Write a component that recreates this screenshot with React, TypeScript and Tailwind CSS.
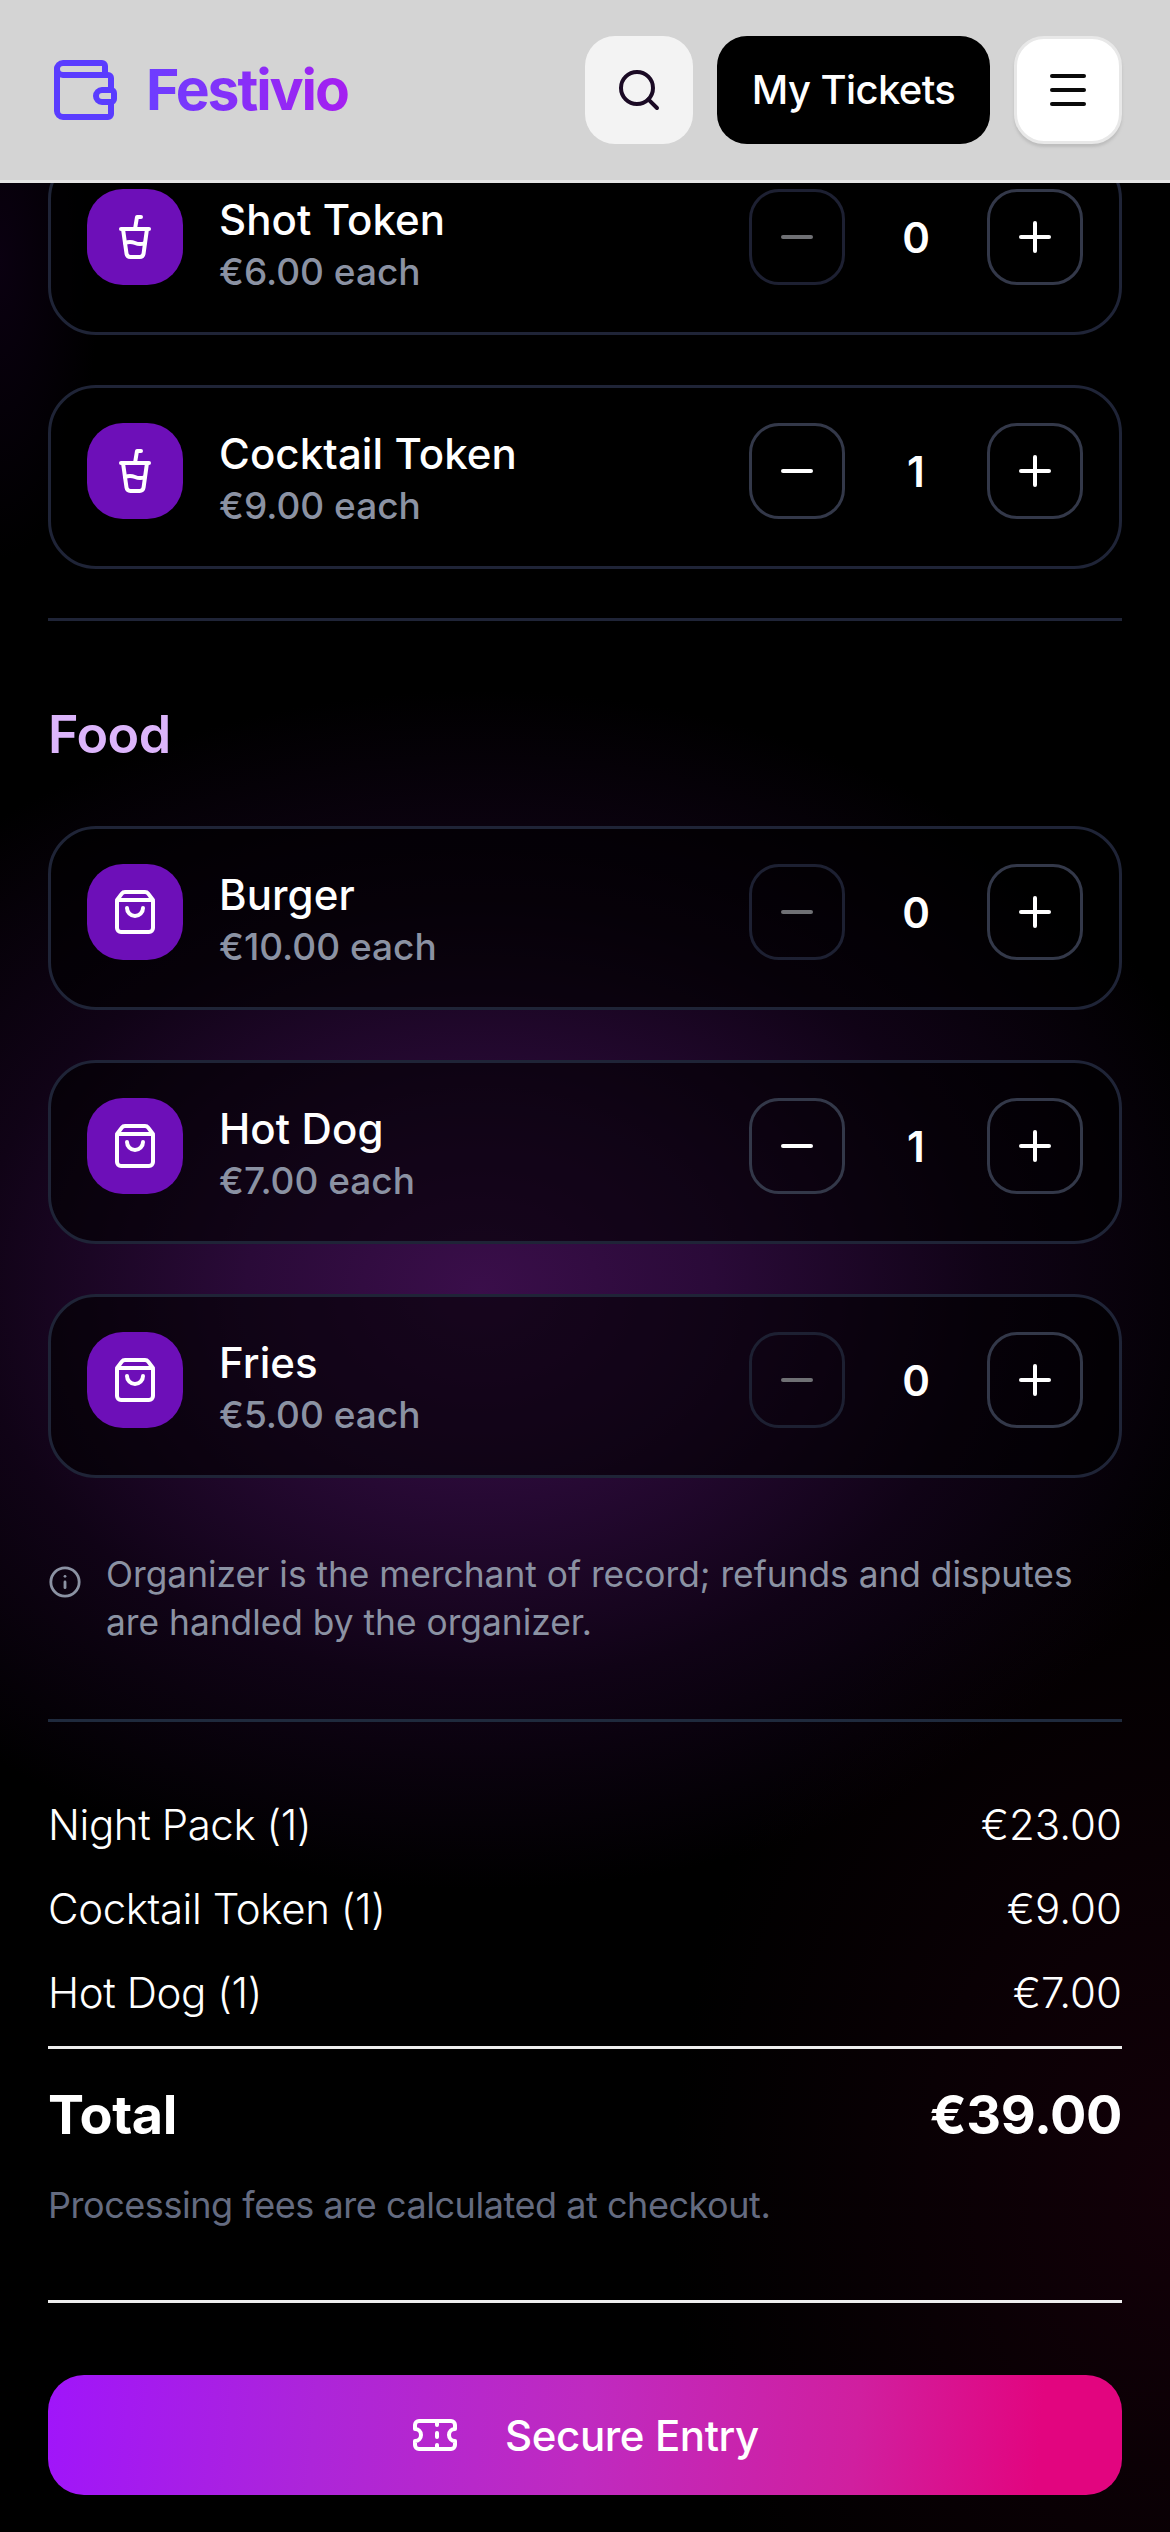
import { CupSoda, Info, Menu, Minus, Plus, Search, ShoppingBag, Ticket, Wallet } from "lucide-react";

type Item = { name: string; price: string; qty: number };

function ItemCard({ item, kind, first }: { item: Item; kind: "drink" | "food"; first?: boolean }) {
  const Icon = kind === "drink" ? CupSoda : ShoppingBag;
  const off = item.qty === 0;
  return (
    <div className={`flex h-[184px] items-start rounded-[48px] border-[3px] border-[#1f2437] bg-black/60 px-[36px] pt-[35px] ${first ? "-mt-[32px]" : ""}`}>
      <div className="flex h-[96px] w-[96px] items-center justify-center rounded-[36px] bg-[#6d0fb8] text-white">
        <Icon size={48} strokeWidth={2} />
      </div>
      <div className="ml-[36px] flex-1">
        <div className="mt-[4px] text-[42px] leading-[54px] font-medium tracking-[0.1px] text-white">{item.name}</div>
        <div className="mt-[1px] text-[37px] leading-[48px] font-medium text-[#8b92a3]">{item.price}</div>
      </div>
      <div className="flex items-center">
        <div className={`flex h-[96px] w-[96px] items-center justify-center rounded-[30px] border-[3px] ${off ? "border-[#1d2032] text-[#6f7074]" : "border-[#333849] text-white"}`}>
          <Minus size={48} strokeWidth={2} />
        </div>
        <div className="w-[142px] text-center text-[42px] font-semibold text-white">{item.qty}</div>
        <div className="flex h-[96px] w-[96px] items-center justify-center rounded-[30px] border-[3px] border-[#333849] text-white">
          <Plus size={48} strokeWidth={2} />
        </div>
      </div>
    </div>
  );
}

function Row({ a, b }: { a: string; b: string }) {
  return (
    <div className="flex h-[84px] items-center justify-between text-[42px] font-light text-white">
      <span className="tracking-[-0.4px]">{a}</span>
      <span className="tracking-[0px]">{b}</span>
    </div>
  );
}

export default function App() {
  return (
    <div className="relative h-[2532px] w-[1170px] overflow-hidden bg-black font-['Inter',sans-serif]">
      <div className="pointer-events-none absolute inset-0 bg-[radial-gradient(ellipse_780px_600px_at_480px_1290px,#3a0e4a_0%,#2a0a38_30%,#100316_65%,#000000_100%)]" />
      <div className="pointer-events-none absolute inset-0 bg-[radial-gradient(ellipse_500px_700px_at_1170px_2200px,#120008_0%,#00000000_100%)]" />
      <div className="pointer-events-none absolute inset-0 bg-[radial-gradient(ellipse_100px_300px_at_0px_260px,#0a0010_0%,#00000000_100%)]" />
      <header className="relative z-10 flex h-[183px] items-center border-b-[3px] border-[#e5e5e5] bg-[#d4d4d4] pl-[54px] pr-[48px]">
        <Wallet size={72} strokeWidth={2} className="-ml-[6px] text-[#5a3cff]" />
        <span className="ml-[26px] bg-[linear-gradient(90deg,#6d3dff,#a51ff0)] bg-clip-text text-[57px] font-bold tracking-[-2.1px] text-transparent">Festivio</span>
        <div className="ml-auto flex items-center gap-[24px]">
          <div className="flex h-[108px] w-[108px] items-center justify-center rounded-[30px] bg-[#f3f3f3] text-[#1a0a24]">
            <Search size={48} strokeWidth={2} />
          </div>
          <div className="flex h-[108px] w-[273px] items-center justify-center rounded-[30px] bg-black text-[40px] font-medium tracking-[-0.6px] text-white">My Tickets</div>
          <div className="flex h-[108px] w-[108px] items-center justify-center rounded-[30px] border-[3px] border-[#e8e8e8] bg-white text-[#0a0a0a] shadow-[0_3px_3px_#bdbdbd]">
            <Menu size={48} strokeWidth={2} />
          </div>
        </div>
      </header>
      <main className="relative px-[48px]">
        <div className="flex flex-col gap-[50px]">
          <ItemCard first kind="drink" item={{ name: "Shot Token", price: "€6.00 each", qty: 0 }} />
          <ItemCard kind="drink" item={{ name: "Cocktail Token", price: "€9.00 each", qty: 1 }} />
        </div>
        <div className="mt-[49px] h-[3px] bg-[#1f2437]" />
        <h2 className="mt-[84px] text-[52px] leading-[60px] font-semibold tracking-[-0.5px] text-[#dcb5fb]">Food</h2>
        <div className="mt-[61px] flex flex-col gap-[50px]">
          <ItemCard kind="food" item={{ name: "Burger", price: "€10.00 each", qty: 0 }} />
          <ItemCard kind="food" item={{ name: "Hot Dog", price: "€7.00 each", qty: 1 }} />
          <ItemCard kind="food" item={{ name: "Fries", price: "€5.00 each", qty: 0 }} />
        </div>
        <div className="mt-[73px] flex items-start">
          <Info size={34} strokeWidth={2} className="mt-[14px] shrink-0 text-[#8b92a3]" />
          <p className="ml-[24px] text-[35.3px] leading-[48px] text-[#8b92a3]">Organizer is the merchant of record; refunds and disputes are handled by the organizer.</p>
        </div>
        <div className="mt-[72px] h-[3px] bg-[#1f2a3d]" />
        <div className="mt-[60px] pb-[12px]">
          <Row a="Night Pack (1)" b="€23.00" />
          <Row a="Cocktail Token (1)" b="€9.00" />
          <Row a="Hot Dog (1)" b="€7.00" />
        </div>
        <div className="h-[3px] bg-[#eeeeee]" />
        <div className="mt-[30px] flex items-center justify-between text-[54px] leading-[72px] font-bold tracking-[-0.4px] text-white">
          <span>Total</span>
          <span>€39.00</span>
        </div>
        <p className="mt-[30px] text-[36px] leading-[48px] tracking-[-0.45px] text-[#646b80]">Processing fees are calculated at checkout.</p>
        <div className="mt-[71px] h-[3px] bg-[#eeeeee]" />
        <button className="mt-[72px] flex h-[120px] w-full items-center justify-center gap-[46px] rounded-[36px] bg-[linear-gradient(95deg,#a015fa_0%,#ad25d9_25%,#bf2ac0_50%,#d01f9f_75%,#e2057f_92%)] text-[42px] font-medium tracking-[-0.4px] text-white">
          <Ticket size={48} strokeWidth={2} />
          <span>Secure Entry</span>
        </button>
      </main>
    </div>
  );
}
